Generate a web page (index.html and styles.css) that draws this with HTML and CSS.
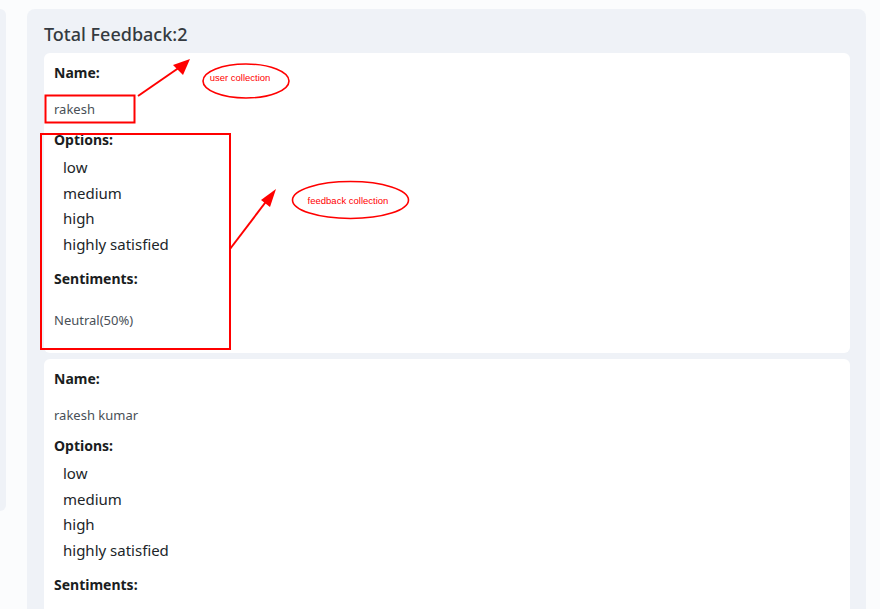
FILE: index.html
```html
<!DOCTYPE html>
<html lang="en">
<head>
    <meta charset="UTF-8">
    <meta name="viewport" content="width=device-width, initial-scale=1.0">
    <title>Feedback</title>
    <link rel="stylesheet" href="styles.css">
</head>
<body>
    <div class="layout">
        <aside class="sidebar"></aside>

        <main class="feedback-panel">
            <h2 class="panel-title">Total Feedback:2</h2>

            <div class="feedback-card">
                <h6 class="field-label">Name:</h6>
                <p class="field-value name-value">rakesh</p>
                <h6 class="field-label">Options:</h6>
                <ul class="option-list">
                    <li>low</li>
                    <li>medium</li>
                    <li>high</li>
                    <li>highly satisfied</li>
                </ul>
                <h6 class="field-label">Sentiments:</h6>
                <p class="field-value sentiment-value">Neutral(50%)</p>
            </div>

            <div class="feedback-card">
                <h6 class="field-label">Name:</h6>
                <p class="field-value name-value">rakesh kumar</p>
                <h6 class="field-label">Options:</h6>
                <ul class="option-list">
                    <li>low</li>
                    <li>medium</li>
                    <li>high</li>
                    <li>highly satisfied</li>
                </ul>
                <h6 class="field-label">Sentiments:</h6>
                <p class="field-value sentiment-value">Neutral(50%)</p>
            </div>
        </main>
    </div>

    <!-- red annotations drawn over the screenshot -->
    <svg class="annotations" width="880" height="609" viewBox="0 0 880 609">
        <rect x="45.5" y="95.5" width="89" height="27" fill="none" stroke="#f00" stroke-width="2"/>
        <rect x="41" y="134" width="189" height="215" fill="none" stroke="#f00" stroke-width="2"/>

        <line x1="138" y1="96" x2="180" y2="67" stroke="#f00" stroke-width="2"/>
        <polygon points="190,59 173,65 183,75" fill="#f00"/>
        <ellipse cx="246" cy="81" rx="43" ry="17" fill="none" stroke="#f00" stroke-width="1.6"/>
        <text x="240" y="81" class="note">user collection</text>

        <line x1="230" y1="249" x2="268" y2="199" stroke="#f00" stroke-width="2"/>
        <polygon points="276,189 261,200 270,207" fill="#f00"/>
        <ellipse cx="350.5" cy="200" rx="58" ry="18.5" fill="none" stroke="#f00" stroke-width="1.6"/>
        <text x="348" y="204" class="note">feedback collection</text>
    </svg>
</body>
</html>
```

FILE: styles.css
```css
body {
    margin: 0;
    background-color: #fbfcfd;
    font-family: "Noto Sans", Arial, sans-serif;
    color: #212529;
    overflow: hidden;
}
.layout {
    display: flex;
    align-items: flex-start;
    gap: 21px;
    padding-top: 9px;
}
.sidebar {
    width: 6px;
    height: 502px;
    background-color: #eff2f7;
    border-radius: 0 8px 8px 0;
    flex-shrink: 0;
}
.feedback-panel {
    width: 839px;
    box-sizing: border-box;
    padding: 14px 16px 20px 17px;
    background-color: #eff2f7;
    border-radius: 8px;
}
.panel-title {
    margin: 0 0 8px;
    font-size: 18px;
    line-height: 22px;
    font-weight: 500;
    color: #343a40;
}
.feedback-card {
    background-color: #fff;
    border-radius: 6px;
    padding: 9px 10px 23px;
    margin-bottom: 6px;
}
.field-label {
    margin: 0;
    font-size: 14px;
    line-height: 21px;
    font-weight: 700;
    color: #1a1d21;
}
.field-value {
    margin: 0;
    font-size: 13px;
    line-height: 20px;
    color: #495057;
}
.name-value {
    margin: 16px 0 10px;
}
.option-list {
    list-style: none;
    margin: 5px 0 11px;
    padding: 0 0 0 9px;
}
.option-list li {
    font-size: 15px;
    line-height: 25.5px;
    color: #212529;
}
.sentiment-value {
    margin-top: 21px;
}
.annotations {
    position: absolute;
    top: 0;
    left: 0;
    pointer-events: none;
}
.note {
    font-family: "Liberation Sans", Arial, sans-serif;
    font-size: 9.5px;
    fill: #f00;
    text-anchor: middle;
}
```
